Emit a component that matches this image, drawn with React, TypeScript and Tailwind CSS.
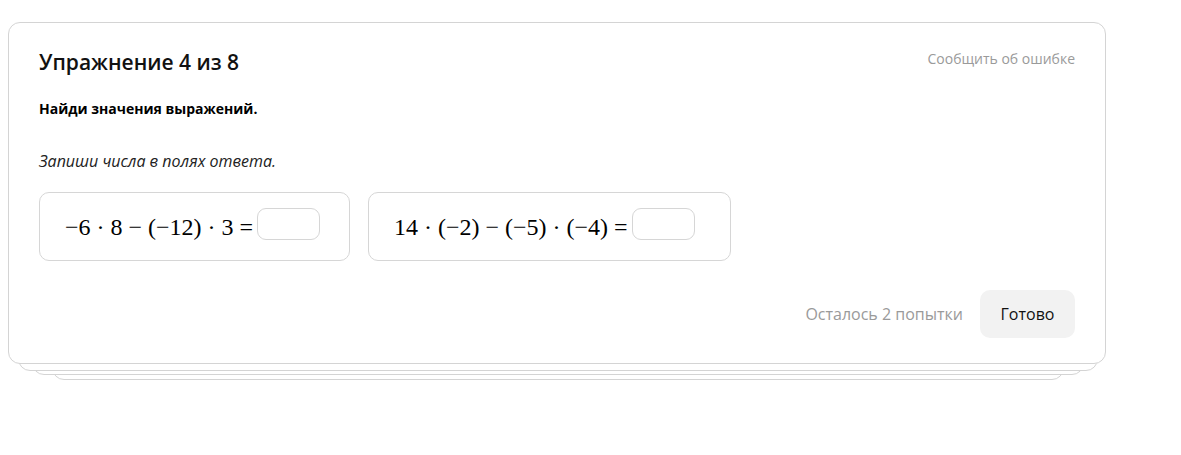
import React from "react";

function MathBox({ parts, width }: { parts: React.ReactNode; width: string }) {
  return (
    <div className={`flex h-[69px] items-center rounded-[10px] border border-[#d6d6d6] pl-[25px] ${width}`}>
      <span className="flex items-center whitespace-pre text-[24px] text-black [font-family:'Liberation_Serif','DejaVu_Serif',serif]">
        {parts}
      </span>
      <span className="mb-[5px] ml-[4px] h-[32px] w-[63px] rounded-[9px] border border-[#d6d6d6]" />
    </div>
  );
}

export default function App() {
  return (
    <div className="min-h-[455px] bg-white pt-[22px] pl-[8px] [font-family:'Open_Sans','Noto_Sans',sans-serif]">
      <div className="relative w-[1098px]">
        <div className="absolute left-[44px] right-[42px] top-[20px] bottom-[-16px] rounded-[12px] border border-[#d4d4d4] bg-white" />
        <div className="absolute left-[24px] right-[22px] top-[14px] bottom-[-11px] rounded-[12px] border border-[#d4d4d4] bg-white" />
        <div className="absolute left-[10px] right-[8px] top-[8px] bottom-[-7px] rounded-[12px] border border-[#d4d4d4] bg-white" />
        <div className="relative rounded-[12px] border border-[#d4d4d4] bg-white px-[30px] pb-[25px] pt-[24px]">
          <div className="flex items-start justify-between">
            <h1 className="text-[21px] font-semibold leading-[30px] text-[#111]">Упражнение 4 из 8</h1>
            <span className="mt-[1px] text-[14px] text-[#9a9a9a]">Сообщить об ошибке</span>
          </div>
          <p className="mt-[21px] text-[14px] font-bold text-black">Найди значения выражений.</p>
          <p className="mt-[30px] text-[16px] italic text-[#222]">Запиши числа в полях ответа.</p>
          <div className="mt-[19px] flex gap-[18px]">
            <MathBox width="w-[311px]" parts={<>−6 · 8 − (−12) · 3 =</>} />
            <MathBox width="w-[363px]" parts={<>14 · (−2) − (−5) · (−4) =</>} />
          </div>
          <div className="mt-[29px] flex items-center justify-end gap-[17px]">
            <span className="text-[16px] text-[#9a9a9a]">Осталось 2 попытки</span>
            <button className="h-[48px] w-[95px] rounded-[10px] bg-[#f2f2f2] text-[16px] text-[#111]">Готово</button>
          </div>
        </div>
      </div>
    </div>
  );
}
